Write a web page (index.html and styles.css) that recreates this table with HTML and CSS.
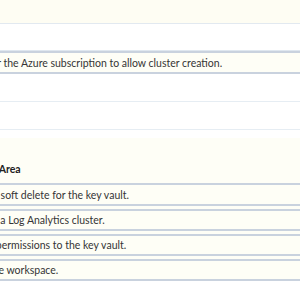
FILE: index.html
```html
<!DOCTYPE html>
<html lang="en">
<head>
<meta charset="utf-8">
<title>Answer Area</title>
<link rel="stylesheet" href="styles.css">
</head>
<body>
  <main class="sheet">
    <section class="actions">
      <div class="slot slot--filled"></div>
      <div class="slot"></div>
      <div class="item item--action"><span class="label">Submit a support request for the Azure subscription to allow cluster creation.</span></div>
      <div class="slot slot--plain"></div>
      <div class="slot slot--plain"></div>
    </section>

    <section class="answer">
      <h2 class="answer__title">Answer Area</h2>
      <ol class="answer__list">
        <li class="item">Enable soft delete for the key vault.</li>
        <li class="item">Create a Log Analytics cluster.</li>
        <li class="item">Grant permissions to the key vault.</li>
        <li class="item">Link the workspace.</li>
      </ol>
    </section>
  </main>
</body>
</html>
```

FILE: styles.css
```css
* {
  box-sizing: border-box;
}

html,
body {
  margin: 0;
  padding: 0;
  background: #ffffff;
  overflow: hidden;
}

body {
  width: 300px;
  height: 300px;
  font-family: Lato, "Open Sans", sans-serif;
  font-size: 10.5px;
  color: #353535;
}

.sheet {
  width: 420px;
}

/* upper list of actions */
.actions {
  display: flex;
  flex-direction: column;
}

.slot {
  height: 27px;
  border-bottom: 1px solid #dfe7ef;
}

.slot--filled {
  height: 24px;
  background: #fefdf3;
  border-bottom: 1px solid #e2e9f0;
}

.slot--plain {
  height: 28px;
  border-bottom: 1px solid #e6edf3;
}

.item {
  display: flex;
  align-items: center;
  height: 22px;
  background: #fefef6;
  border-top: 2px solid #c9d2de;
  border-bottom: 2px solid #c9d2de;
  white-space: nowrap;
  overflow: hidden;
}

.item--action {
  height: 23px;
}

.item--action .label {
  margin-left: -131px;
}

/* answer area */
.answer {
  margin-top: 8px;
  background: #fefef6;
  padding-top: 25px;
  margin-left: -33px;
}

.answer__title {
  margin: 0 0 0 -6px;
  padding: 0 0 8px 0;
  font-size: 10.5px;
  font-weight: 700;
  color: #222;
  border-bottom: 2px solid #c9d2de;
}

.answer__list {
  list-style: none;
  margin: 0;
  padding: 0;
  display: flex;
  flex-direction: column;
  gap: 3px;
}

.answer__list .item:first-child {
  border-top: none;
  height: 21px;
}
```
